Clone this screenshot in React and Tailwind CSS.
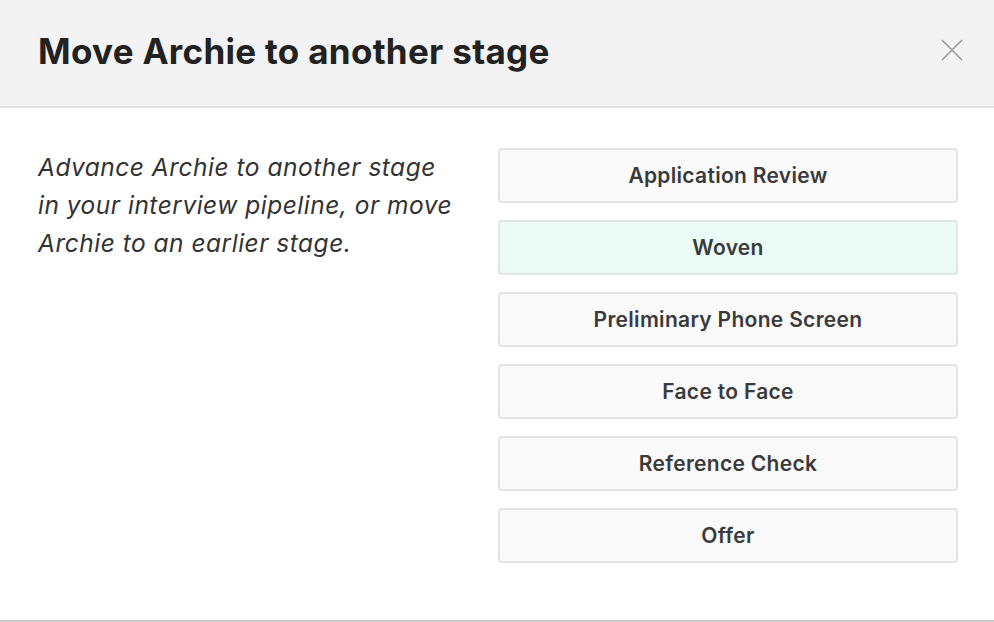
import React from 'react';

const stages = [
    { name: 'Application Review', current: false },
    { name: 'Woven', current: true },
    { name: 'Preliminary Phone Screen', current: false },
    { name: 'Face to Face', current: false },
    { name: 'Reference Check', current: false },
    { name: 'Offer', current: false },
];

export default function App() {
    return (
        <div className="w-[994px] h-[622px] bg-white flex flex-col font-['Inter',sans-serif] overflow-hidden">
            {/* Header */}
            <header className="h-[108px] bg-[#f3f3f3] border-b-2 border-[#e2e2e2] flex items-center justify-between pl-[38px] pr-[30px] shrink-0">
                <h1 className="text-[35px] font-bold text-[#222222] tracking-[0.3px] pb-[4px]">
                    Move Archie to another stage
                </h1>
                <button className="w-[24px] h-[24px] flex items-center justify-center text-[#9a9a9a] mb-[6px]">
                    <svg width="24" height="24" viewBox="0 0 24 24" fill="none" stroke="currentColor" strokeWidth="1.6">
                        <path d="M2 2 L22 22 M22 2 L2 22" />
                    </svg>
                </button>
            </header>

            {/* Content */}
            <div className="flex-1 flex pl-[38px] pr-[36px] pt-[40px]">
                <p className="w-[420px] text-[24.5px] leading-[38px] italic text-[#333333] tracking-[0.5px] whitespace-nowrap">
                    Advance Archie to another stage
                    <br />
                    in your interview pipeline, or move
                    <br />
                    Archie to an earlier stage.
                </p>
                <div className="ml-[40px] w-[460px] flex flex-col gap-[17px]">
                    {stages.map((stage) => (
                        <button
                            key={stage.name}
                            className={`h-[55px] rounded-[4px] border-2 border-[#e3e3e3] text-[21px] font-semibold text-[#3a3a3a] tracking-[0.3px] flex items-center justify-center ${
                                stage.current ? 'bg-[#eafcf5]' : 'bg-[#fafafa]'
                            }`}
                        >
                            {stage.name}
                        </button>
                    ))}
                </div>
            </div>

            {/* Footer divider */}
            <div className="h-[2px] bg-[#c9c9c9] shrink-0" />
        </div>
    );
}
